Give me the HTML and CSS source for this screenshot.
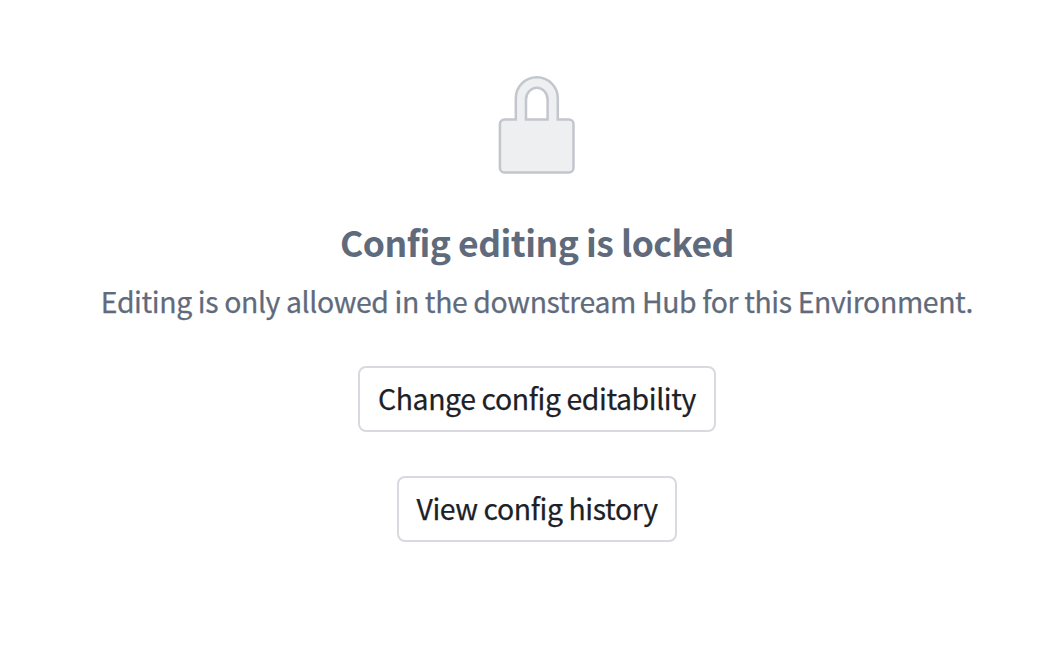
FILE: index.html
```html
<!DOCTYPE html>
<html lang="en">
<head>
    <meta charset="UTF-8">
    <meta name="viewport" content="width=device-width, initial-scale=1.0">
    <title>Config editing is locked</title>
    <link rel="stylesheet" href="styles.css">
</head>
<body>
    <main class="empty-state">
        <svg class="lock-icon" width="80" height="100" viewBox="0 0 80 100" aria-hidden="true">
            <path d="M18.800 44.600V23.300a21 21 0 0 1 42 0V44.600H72a4.500 4.500 0 0 1 4.500 4.500V93a4.500 4.500 0 0 1-4.500 4.500H7.400a4.500 4.500 0 0 1-4.500-4.500V49.100a4.500 4.500 0 0 1 4.500-4.500ZM29 44.600H50.600V24.500a10.800 11.700 0 0 0-21.600 0Z" fill-rule="evenodd"/>
        </svg>
        <h1 class="title">Config editing is locked</h1>
        <p class="description">Editing is only allowed in the downstream Hub for this Environment.</p>
        <div class="actions">
            <button class="button" type="button">Change config editability</button>
            <button class="button" type="button">View config history</button>
        </div>
    </main>
</body>
</html>
```

FILE: styles.css
```css
body {
    margin: 0;
    background: #fff;
    font-family: "Noto Sans CJK SC", "Open Sans", sans-serif;
}
.empty-state {
    display: flex;
    flex-direction: column;
    align-items: center;
    padding: 75px 0 0 10px;
    text-align: center;
}
.lock-icon {
    display: block;
    fill: #edeff1;
    stroke: #c2c7ce;
    stroke-width: 2.5;
}
.title {
    margin: 42px 0 0;
    color: #5f6b7c;
    font-size: 35.5px;
    font-weight: 700;
    line-height: 50px;
    letter-spacing: -0.5px;
    white-space: nowrap;
}
.description {
    margin: 14px 0 0;
    color: #5f6b7c;
    font-size: 28.4px;
    line-height: 40px;
    letter-spacing: -0.38px;
    white-space: nowrap;
    -webkit-text-stroke: 0.25px;
}
.actions {
    display: flex;
    flex-direction: column;
    align-items: center;
    gap: 44px;
    margin-top: 45px;
}
.button {
    box-sizing: border-box;
    height: 66px;
    padding: 0 17.6px 2px;
    border: 2px solid #d9dadf;
    border-radius: 8px;
    background: #fff;
    color: #1c2127;
    font-family: inherit;
    font-size: 28.4px;
    line-height: 40px;
    letter-spacing: -0.4px;
    white-space: nowrap;
    cursor: pointer;
    -webkit-text-stroke: 0.25px;
}
```
